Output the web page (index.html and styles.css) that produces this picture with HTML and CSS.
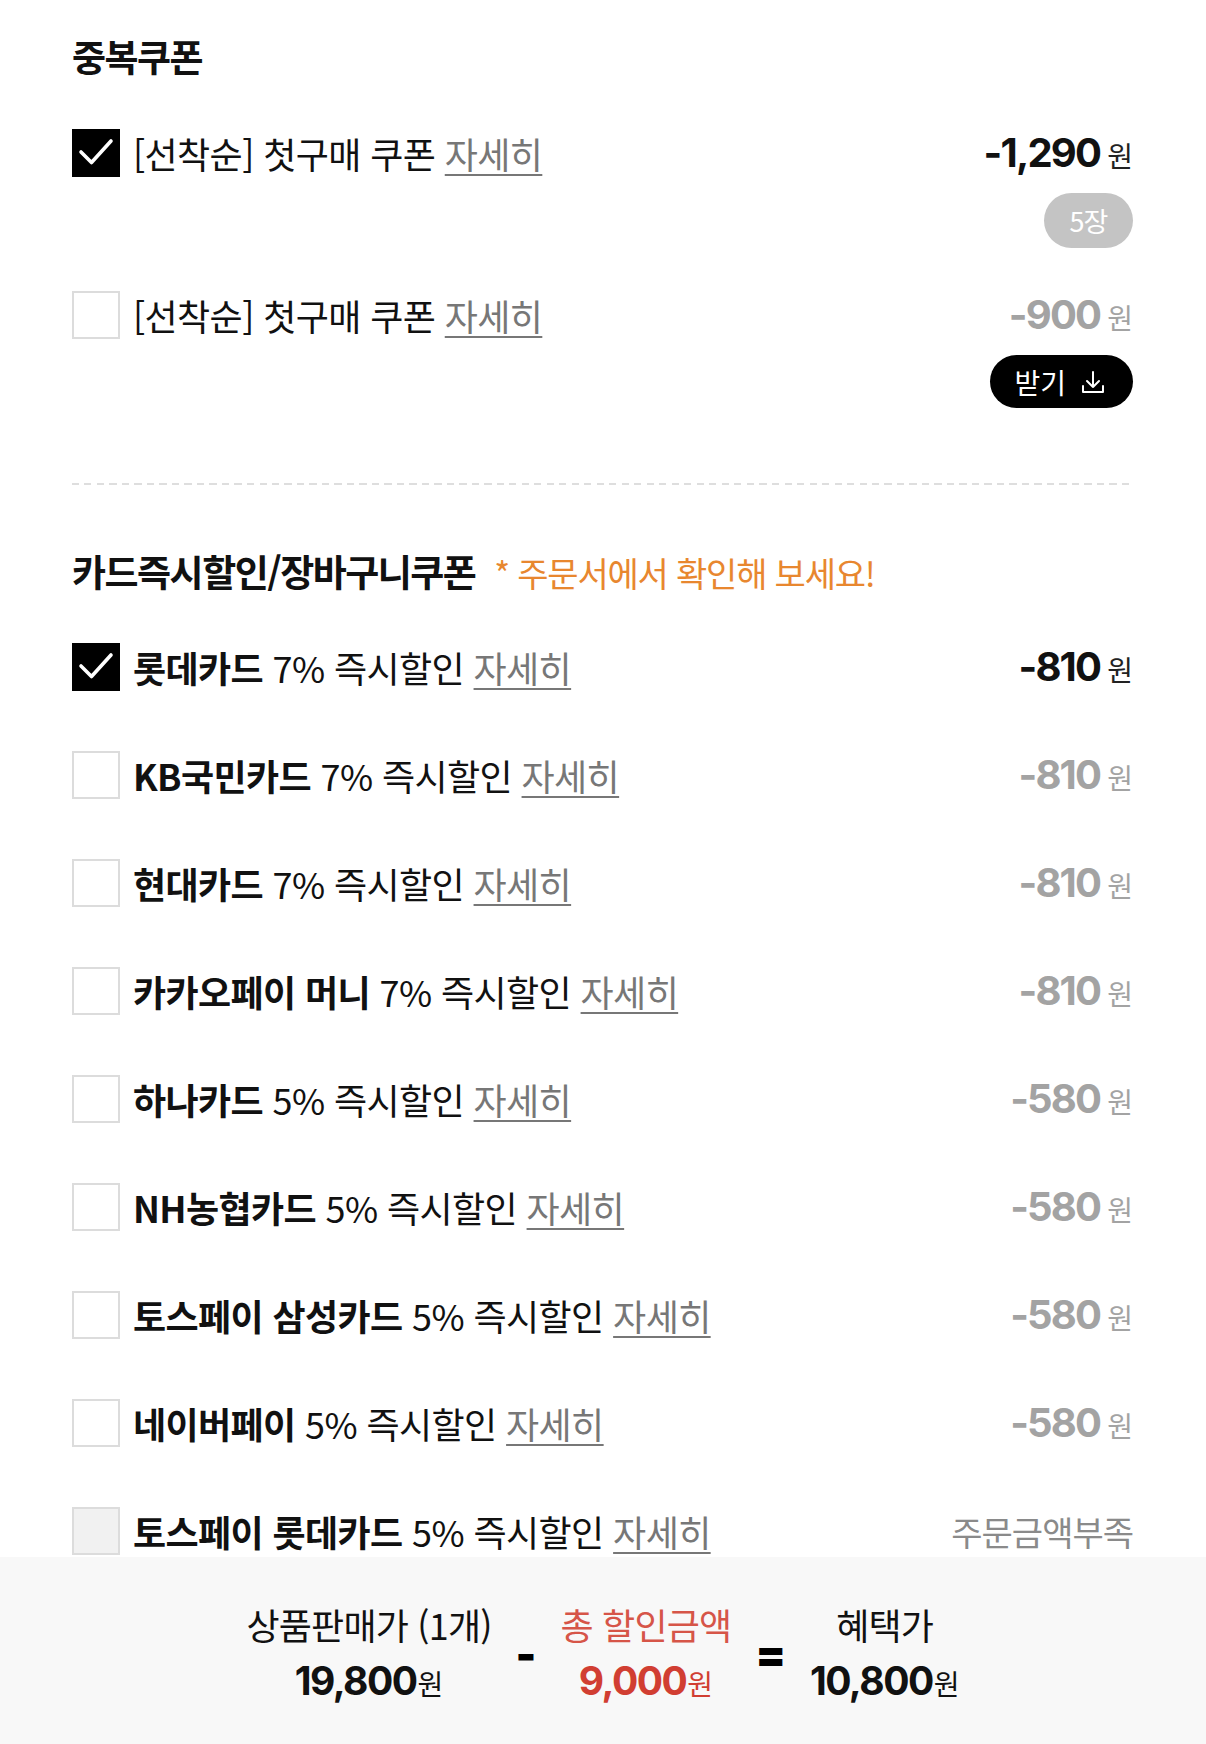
FILE: index.html
```html
<!DOCTYPE html>
<html lang="ko"><head>
    <meta charset="UTF-8">
    <meta name="viewport" content="width=device-width, initial-scale=1.0">
    <title>쿠폰 / 할인 적용</title>
    <link rel="stylesheet" href="styles.css">
</head>
<body>
    <div class="page">
        <section class="coupons">
            <h2 class="sec-title">중복쿠폰</h2>
            <div class="coupon first">
                <div class="item">
                    <span class="check on">
                        <svg viewBox="0 0 48 48" width="48" height="48"><polyline points="9,23 19.5,33.5 39,12" fill="none" stroke="#fff" stroke-width="3.6" stroke-linecap="round" stroke-linejoin="round"/></svg>
                    </span>
                    <span class="label">[선착순] 첫구매 쿠폰 <a href="#" class="more">자세히</a></span>
                </div>
                <div class="side">
                    <div class="price">-1,290<span class="won">원</span></div>
                    <span class="pill">5장</span>
                </div>
            </div>
            <div class="coupon second">
                <div class="item">
                    <span class="check"></span>
                    <span class="label">[선착순] 첫구매 쿠폰 <a href="#" class="more">자세히</a></span>
                </div>
                <div class="side">
                    <div class="price off">-900<span class="won">원</span></div>
                    <button class="get-btn">받기
                        <svg viewBox="0 0 26 26" width="26" height="26"><path d="M13 3v15M7 12l6 6 6-6M3 17v6h20v-6" fill="none" stroke="#fff" stroke-width="2" stroke-linecap="round" stroke-linejoin="round"/></svg>
                    </button>
                </div>
            </div>
        </section>

        <div class="dash"></div>

        <section class="cards">
            <h2 class="sec-title">카드즉시할인/장바구니쿠폰 <span class="note">* 주문서에서 확인해 보세요!</span></h2>
            <ul class="card-list">
                <li class="row">
                    <div class="item">
                        <span class="check on">
                            <svg viewBox="0 0 48 48" width="48" height="48"><polyline points="9,23 19.5,33.5 39,12" fill="none" stroke="#fff" stroke-width="3.6" stroke-linecap="round" stroke-linejoin="round"/></svg>
                        </span>
                        <span class="label"><b>롯데카드</b> 7% 즉시할인 <a href="#" class="more">자세히</a></span>
                    </div>
                    <div class="price">-810<span class="won">원</span></div>
                </li>
                <li class="row">
                    <div class="item">
                        <span class="check"></span>
                        <span class="label"><b>KB국민카드</b> 7% 즉시할인 <a href="#" class="more">자세히</a></span>
                    </div>
                    <div class="price off">-810<span class="won">원</span></div>
                </li>
                <li class="row">
                    <div class="item">
                        <span class="check"></span>
                        <span class="label"><b>현대카드</b> 7% 즉시할인 <a href="#" class="more">자세히</a></span>
                    </div>
                    <div class="price off">-810<span class="won">원</span></div>
                </li>
                <li class="row">
                    <div class="item">
                        <span class="check"></span>
                        <span class="label"><b>카카오페이 머니</b> 7% 즉시할인 <a href="#" class="more">자세히</a></span>
                    </div>
                    <div class="price off">-810<span class="won">원</span></div>
                </li>
                <li class="row">
                    <div class="item">
                        <span class="check"></span>
                        <span class="label"><b>하나카드</b> 5% 즉시할인 <a href="#" class="more">자세히</a></span>
                    </div>
                    <div class="price off">-580<span class="won">원</span></div>
                </li>
                <li class="row">
                    <div class="item">
                        <span class="check"></span>
                        <span class="label"><b>NH농협카드</b> 5% 즉시할인 <a href="#" class="more">자세히</a></span>
                    </div>
                    <div class="price off">-580<span class="won">원</span></div>
                </li>
                <li class="row">
                    <div class="item">
                        <span class="check"></span>
                        <span class="label"><b>토스페이 삼성카드</b> 5% 즉시할인 <a href="#" class="more">자세히</a></span>
                    </div>
                    <div class="price off">-580<span class="won">원</span></div>
                </li>
                <li class="row">
                    <div class="item">
                        <span class="check"></span>
                        <span class="label"><b>네이버페이</b> 5% 즉시할인 <a href="#" class="more">자세히</a></span>
                    </div>
                    <div class="price off">-580<span class="won">원</span></div>
                </li>
                <li class="row">
                    <div class="item">
                        <span class="check disabled"></span>
                        <span class="label"><b>토스페이 롯데카드</b> 5% 즉시할인 <a href="#" class="more">자세히</a></span>
                    </div>
                    <div class="lack">주문금액부족</div>
                </li>
            </ul>
        </section>
    </div>

    <div class="summary">
        <div class="sum-col">
            <div class="sum-label">상품판매가 (1개)</div>
            <div class="sum-value">19,800<span class="won">원</span></div>
        </div>
        <div class="op">-</div>
        <div class="sum-col discount">
            <div class="sum-label">총 할인금액</div>
            <div class="sum-value">9,000<span class="won">원</span></div>
        </div>
        <div class="op">=</div>
        <div class="sum-col">
            <div class="sum-label">혜택가</div>
            <div class="sum-value">10,800<span class="won">원</span></div>
        </div>
    </div>
</body>
</html>
```

FILE: styles.css
```css
body {
    margin: 0;
    padding: 0;
    background-color: #fff;
    color: #111;
    font-family: 'Noto Sans CJK KR', 'Noto Sans', sans-serif;
}
.page {
    padding: 36px 73px 0 72px;
}
.sec-title {
    margin: 0;
    font-size: 37px;
    line-height: 40px;
    font-weight: bold;
    letter-spacing: -1.5px;
    color: #111;
}
.note {
    margin-left: 10px;
    font-size: 34px;
    font-weight: normal;
    letter-spacing: -1.2px;
    color: #e8872f;
}
.coupon {
    display: flex;
    justify-content: space-between;
    align-items: flex-start;
}
.coupon.first {
    margin-top: 53px;
}
.coupon.second {
    margin-top: 43px;
}
.item {
    display: flex;
    align-items: center;
    height: 48px;
}
.check {
    flex: none;
    width: 48px;
    height: 48px;
    box-sizing: border-box;
    border: 2px solid #dcdcdc;
    background-color: #fff;
    margin-right: 13px;
}
.check svg {
    display: block;
    margin: -2px;
}
.check.on {
    background-color: #000;
    border-color: #000;
}
.check.disabled {
    background-color: #f1f1f1;
}
.label {
    font-size: 36px;
    letter-spacing: -0.6px;
    white-space: nowrap;
    color: #111;
}
.label b {
    font-weight: bold;
}
.more {
    color: #777;
    text-decoration: underline;
    text-decoration-thickness: 2px;
    text-underline-offset: 5px;
}
.side {
    display: flex;
    flex-direction: column;
    align-items: flex-end;
}
.price {
    display: flex;
    align-items: baseline;
    height: 48px;
    line-height: 48px;
    font-family: 'Inter', 'Liberation Sans', sans-serif;
    font-size: 40px;
    font-weight: bold;
    letter-spacing: -1.8px;
    color: #111;
}
.won {
    font-family: 'Noto Sans CJK KR', sans-serif;
    font-size: 28px;
    font-weight: normal;
    letter-spacing: 0;
    margin-left: 7px;
    color: #222;
}
.price.off,
.price.off .won {
    color: #a3a3a3;
}
.pill {
    margin-top: 16px;
    height: 55px;
    width: 89px;
    border-radius: 28px;
    background-color: #c4c4c4;
    color: #fff;
    font-size: 27px;
    line-height: 55px;
    text-align: center;
    letter-spacing: -1px;
}
.get-btn {
    margin-top: 16px;
    height: 53px;
    padding: 0 27px 0 24px;
    border: none;
    border-radius: 27px;
    background-color: #000;
    color: #fff;
    font-family: inherit;
    font-size: 28px;
    display: flex;
    align-items: center;
    gap: 14px;
}
.get-btn svg {
    display: block;
}
.dash {
    margin-top: 75px;
    height: 2px;
    background: repeating-linear-gradient(90deg, #dedede 0 7px, transparent 7px 12.5px);
}
.cards .sec-title {
    margin-top: 66px;
}
.card-list {
    list-style: none;
    margin: 50px 0 0;
    padding: 0;
    display: flex;
    flex-direction: column;
    gap: 60px;
}
.row {
    display: flex;
    justify-content: space-between;
    align-items: center;
    height: 48px;
}
.lack {
    font-size: 34px;
    letter-spacing: -1px;
    color: #8a8a8a;
}
.summary {
    margin-top: 2px;
    height: 189px;
    box-sizing: border-box;
    padding-top: 46px;
    background-color: #f8f8f8;
    display: flex;
    justify-content: center;
    align-items: flex-start;
    gap: 24px;
}
.sum-col {
    text-align: center;
}
.sum-label {
    font-size: 36px;
    line-height: 42px;
    letter-spacing: -0.8px;
    color: #111;
}
.sum-value {
    margin-top: 14px;
    line-height: 44px;
    font-family: 'Inter', 'Liberation Sans', sans-serif;
    font-size: 39px;
    font-weight: bold;
    letter-spacing: -1.5px;
    color: #111;
}
.sum-value .won {
    font-size: 28px;
    margin-left: 1px;
    color: inherit;
}
.discount .sum-label {
    color: #d65548;
}
.discount .sum-value {
    color: #d13e32;
}
.op {
    align-self: center;
    margin-bottom: 42px;
    font-family: 'Inter', 'Liberation Sans', sans-serif;
    font-size: 44px;
    font-weight: 900;
    line-height: 1;
    color: #000;
}
```
